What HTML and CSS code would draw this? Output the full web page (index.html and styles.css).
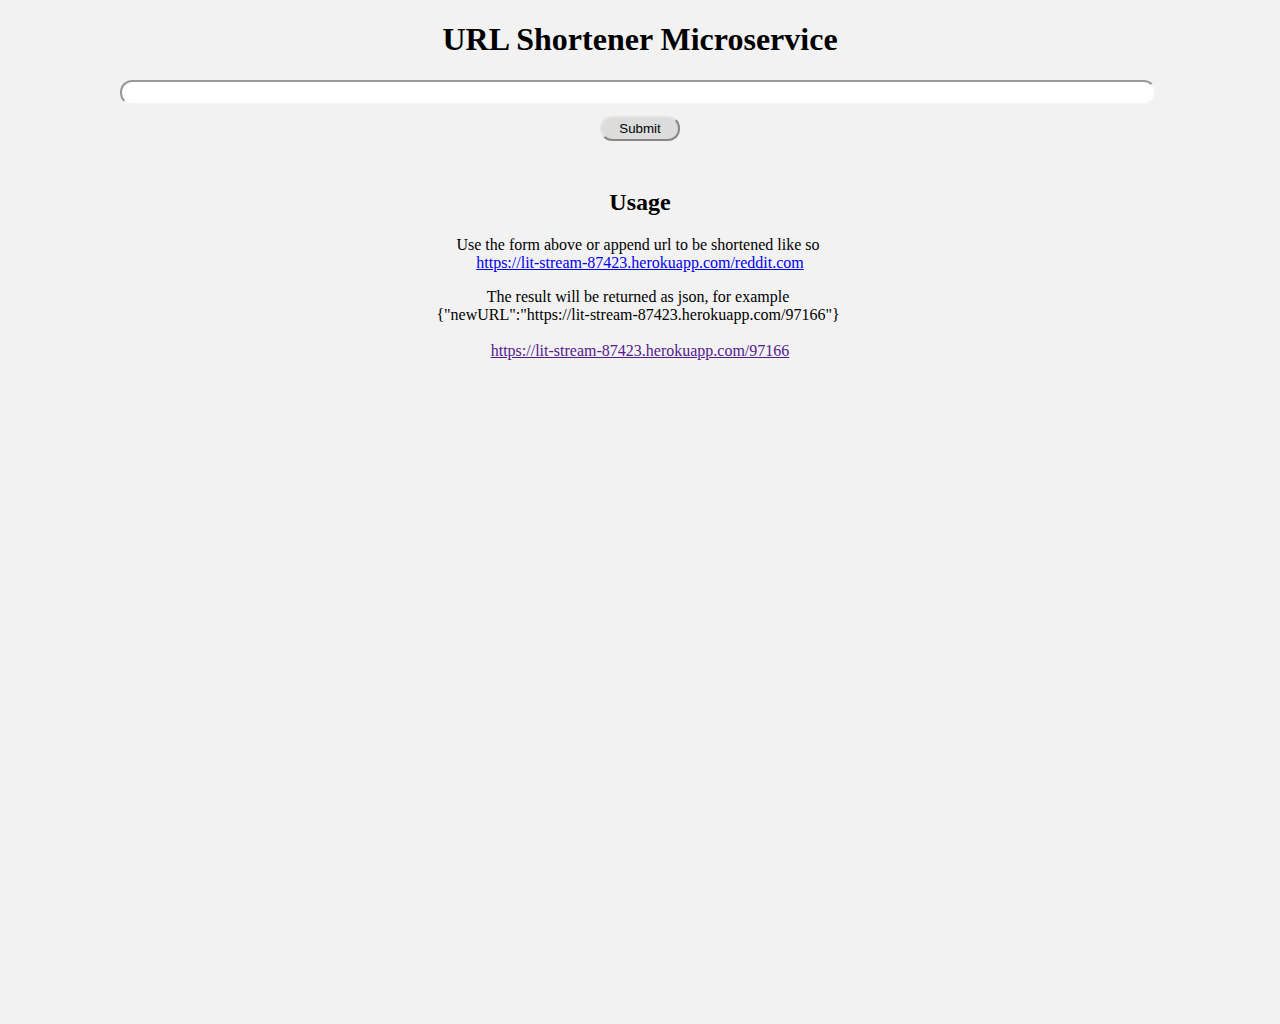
FILE: index.html
```html
<!DOCTYPE html>
<html>
<head>
<meta charset="utf-8">
<title>URL Shortener Microservice</title>
<link rel="stylesheet" href="styles.css">
</head>
<body>
<h1 class="title">URL Shortener Microservice</h1>
<form class="form">
  <input class="url-input" type="text">
  <button class="submit" type="button">Submit</button>
</form>
<section class="usage">
  <h2 class="usage-title">Usage</h2>
  <p class="para"><span class="line">Use the form above or append url to be shortened like so</span><br><a class="link" href="#a">https://lit-stream-87423.herokuapp.com/reddit.com</a></p>
  <p class="para"><span class="line">The result will be returned as json, for example</span><br><span class="line">{"newURL":"https://lit-stream-87423.herokuapp.com/97166"}</span></p>
  <p class="para last"><a class="link visited" href="#b">https://lit-stream-87423.herokuapp.com/97166</a></p>
</section>
</body>
</html>
```
FILE: styles.css
```css
html {
  background: #f2f2f2;
}
body {
  margin: 0 8px 8px;
  font-family: "Liberation Serif", "Times New Roman", serif;
  font-size: 16px;
  color: #000;
  text-align: center;
  background: #f2f2f2;
}
.title {
  font-size: 32px;
  font-weight: bold;
  margin: 21.44px 0;
  line-height: 37px;
}
.form {
  display: flex;
  flex-direction: column;
  align-items: center;
  gap: 11px;
  margin: 0 0 48px;
}
.url-input {
  box-sizing: border-box;
  width: 1036px;
  height: 25px;
  margin-right: 4px;
  background: #fff;
  border: 2px solid;
  border-color: #999 #f4f4f4 #f4f4f4 #999;
  border-radius: 12px;
  outline: none;
}
.submit {
  box-sizing: border-box;
  width: 80px;
  height: 25px;
  font-family: "Liberation Sans", Arial, sans-serif;
  font-size: 13.33px;
  color: #000;
  background: #dcdcdc;
  border: 2px solid;
  border-color: #e4e4e4 #888 #888 #e4e4e4;
  border-radius: 12px;
  padding: 0;
}
.usage-title {
  font-size: 24px;
  font-weight: bold;
  margin: 19.92px 0;
}
.para {
  margin: 16px 0;
  line-height: 18px;
}
.para.last {
  margin-top: 18px;
}
.line {
  padding-right: 4px;
}
.link {
  color: #0000ee;
}
.link.visited {
  color: #551a8b;
}
```
